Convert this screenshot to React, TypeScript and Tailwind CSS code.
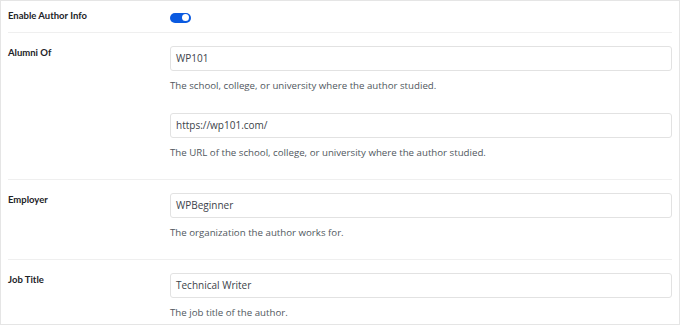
import React, { useState } from 'react';

const font = { fontFamily: '"Open Sans", "Noto Sans", sans-serif' };
const labelFont = { fontFamily: 'Lato, "Open Sans", sans-serif' };

function Field({ value, help }: { value: string; help: string }) {
  return (
    <div>
      <div className="h-[25px] border border-[#e2e2e2] rounded-[3px] bg-white flex items-center px-[5px] text-[10px] text-[#3c434a]">
        {value}
      </div>
      <p className="mt-[9px] text-[9.7px] leading-[12px] text-[#50575e]">{help}</p>
    </div>
  );
}

function Row({ label, children, last }: { label: string; children: React.ReactNode; last?: boolean }) {
  return (
    <div className={`flex pt-[13px] ${last ? 'pb-[4px]' : 'pb-[20px] border-b border-[#efefef]'}`}>
      <div className="w-[162px] shrink-0 pt-[1px] text-[9.5px] leading-[12px] font-bold text-[#1d2327]" style={labelFont}>
        {label}
      </div>
      <div className="flex-1">{children}</div>
    </div>
  );
}

export default function App() {
  const [enabled, setEnabled] = useState(true);

  return (
    <div className="w-[680px] h-[325px] bg-white" style={font}>
      <div className="h-[325px] border border-[#e5e5e5] pl-[7px] pr-[7px]">
        <div className="flex items-center h-[32px] border-b border-[#efefef]">
          <div className="w-[162px] shrink-0 text-[9.5px] font-bold text-[#1d2327]" style={labelFont}>
            Enable Author Info
          </div>
          <button
            onClick={() => setEnabled(!enabled)}
            className={`w-[21px] h-[10px] rounded-full flex items-center px-[2px] mt-[2px] ${enabled ? 'bg-[#0b5ae0] justify-end' : 'bg-gray-300 justify-start'}`}
          >
            <span className="w-[7px] h-[7px] rounded-full bg-white" />
          </button>
        </div>

        <Row label="Alumni Of">
          <Field value="WP101" help="The school, college, or university where the author studied." />
          <div className="mt-[21px]">
            <Field value="https://wp101.com/" help="The URL of the school, college, or university where the author studied." />
          </div>
        </Row>

        <Row label="Employer">
          <Field value="WPBeginner" help="The organization the author works for." />
        </Row>

        <Row label="Job Title" last>
          <Field value="Technical Writer" help="The job title of the author." />
        </Row>
      </div>
    </div>
  );
}
